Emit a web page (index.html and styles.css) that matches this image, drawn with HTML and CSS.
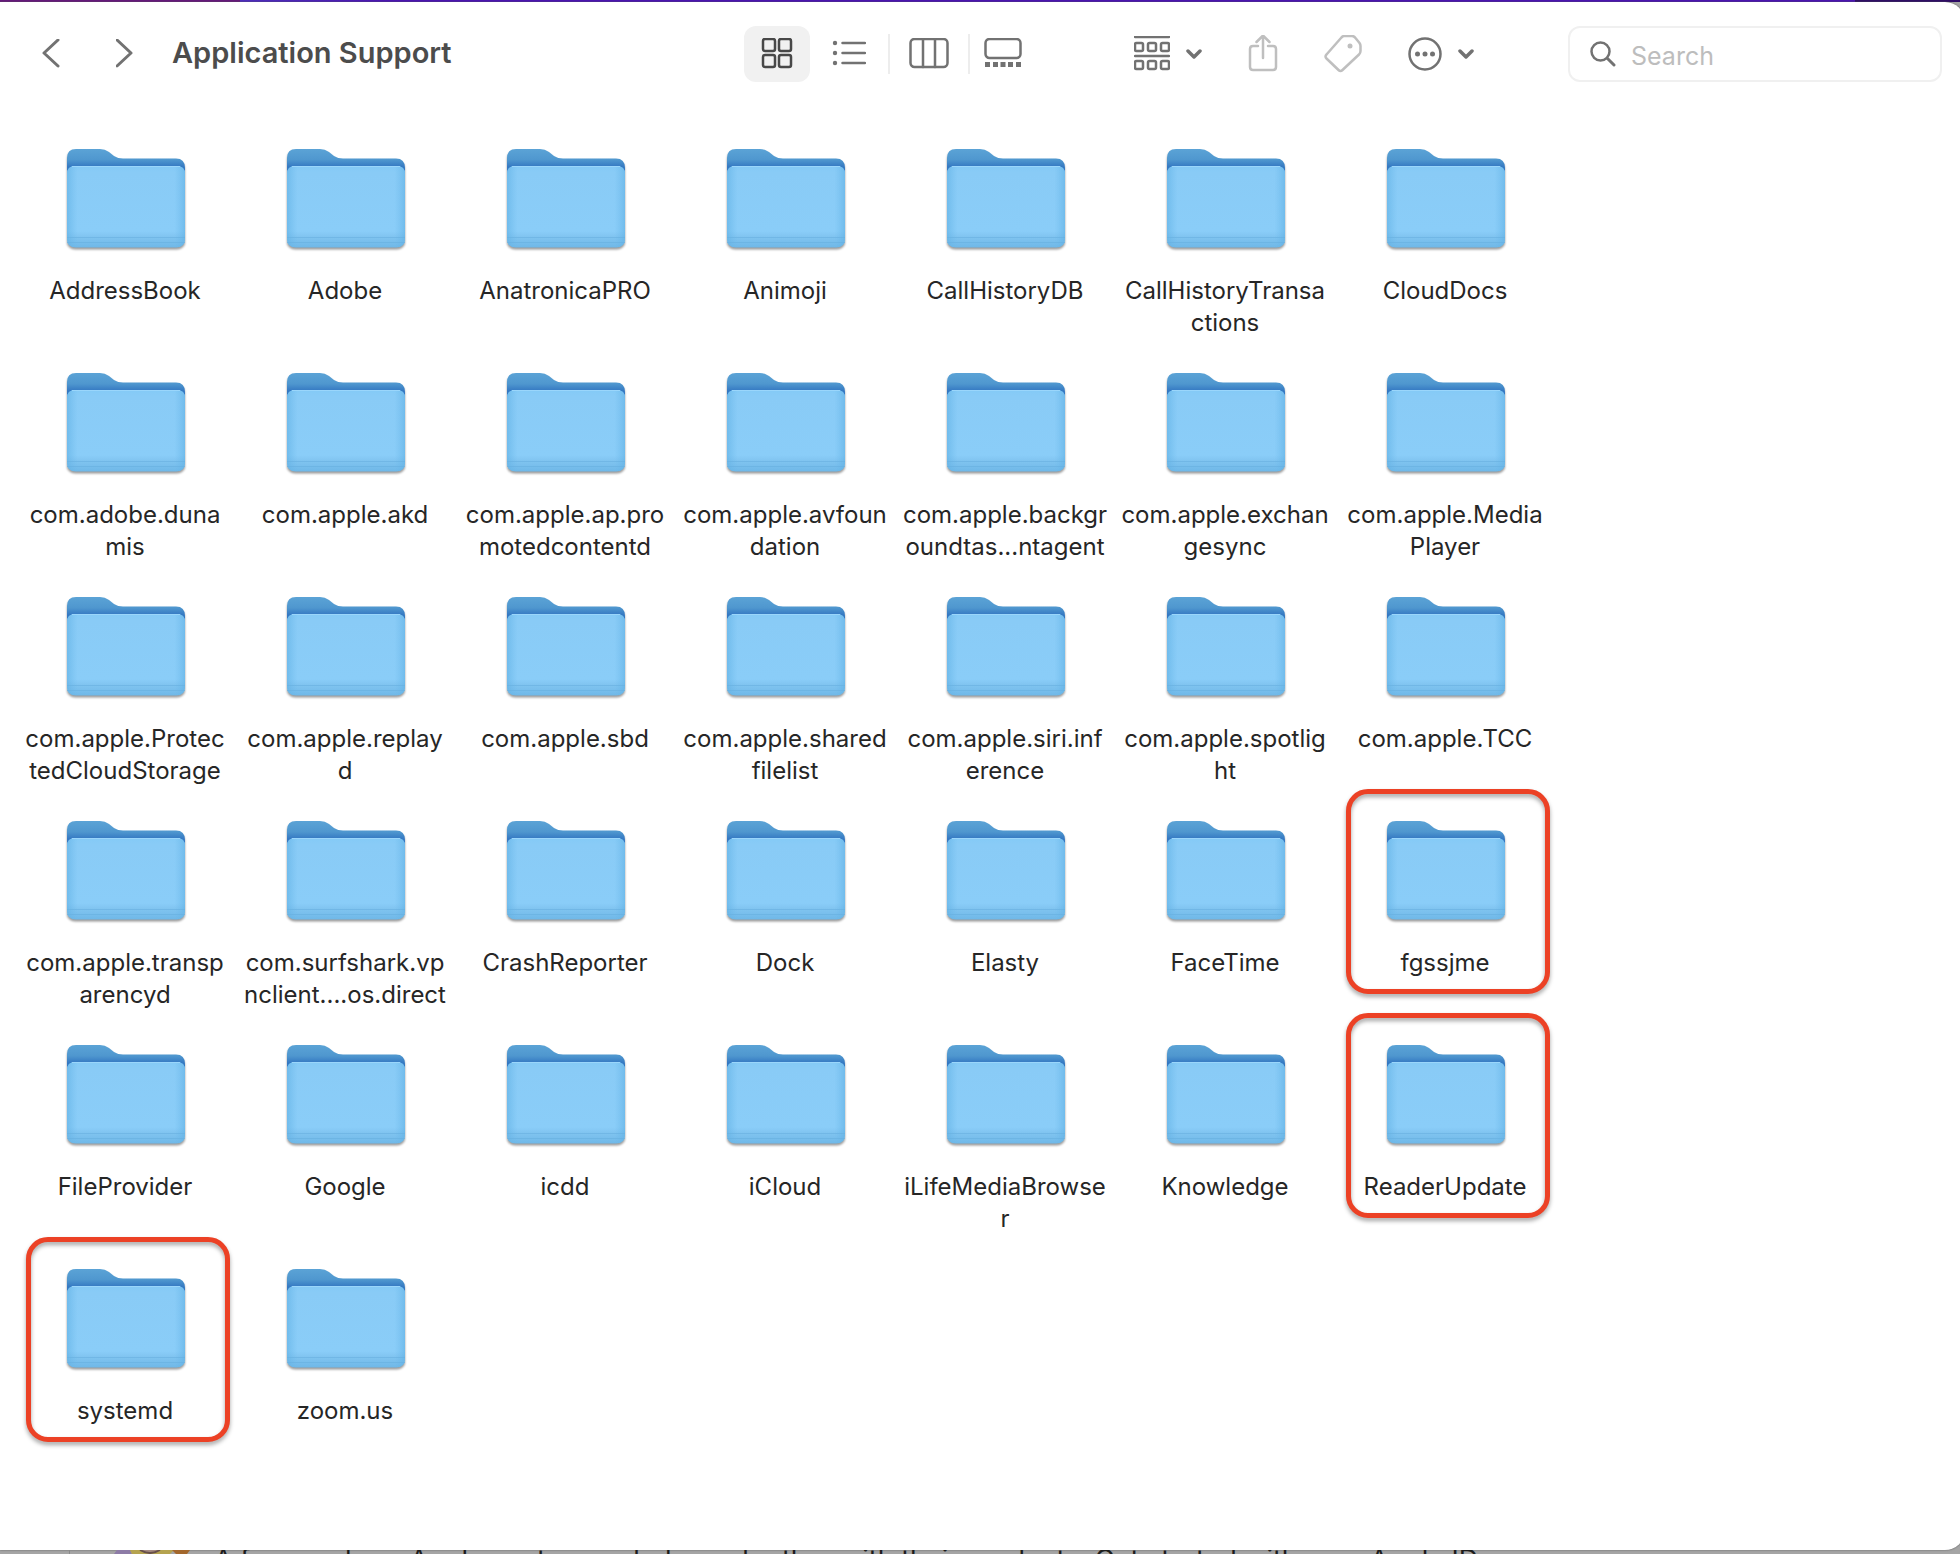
FILE: index.html
```html
<!DOCTYPE html>
<html lang="en">
<head>
<meta charset="utf-8">
<title>Application Support</title>
<link rel="stylesheet" href="styles.css">
<script src="folders.js" defer></script>
</head>
<body>
<svg class="sprite" aria-hidden="true">
  <defs>
    <linearGradient id="back" x1="0" y1="0" x2="0" y2="1">
      <stop offset="0" stop-color="#5ba3d6"/>
      <stop offset="0.12" stop-color="#4f97cf"/>
      <stop offset="0.2" stop-color="#3478c2"/>
      <stop offset="1" stop-color="#3478c2"/>
    </linearGradient>
    <linearGradient id="front" x1="0" y1="0" x2="0" y2="1">
      <stop offset="0" stop-color="#84caf6"/>
      <stop offset="0.08" stop-color="#89cbf6"/>
      <stop offset="0.8" stop-color="#8acdf8"/>
      <stop offset="0.87" stop-color="#80c4f0"/>
      <stop offset="1" stop-color="#6fb8e8"/>
    </linearGradient>
    <linearGradient id="sides" x1="0" y1="0" x2="1" y2="0">
      <stop offset="0" stop-color="#5fb0e4" stop-opacity="0.6"/>
      <stop offset="0.09" stop-color="#6bb8ea" stop-opacity="0"/>
      <stop offset="0.91" stop-color="#6bb8ea" stop-opacity="0"/>
      <stop offset="1" stop-color="#5fb0e4" stop-opacity="0.6"/>
    </linearGradient>
    <symbol id="folder" viewBox="0 0 118 99">
      <path fill="url(#back)" d="M0 9Q0 0 9 0H33Q38 0 42 3L47 7Q51 9.500 56 9.500H109Q118 9.500 118 19V90H0Z"/>
      <path fill="url(#front)" d="M0 25Q0 17 8 17H110Q118 17 118 25V90Q118 98.500 109 98.500H9Q0 98.500 0 90Z"/>
      <path fill="url(#sides)" d="M0 25Q0 17 8 17H110Q118 17 118 25V90Q118 98.500 109 98.500H9Q0 98.500 0 90Z"/>
      <path fill="none" stroke="#9ad6fb" d="M5 17.500H113"/>
      <path fill="none" stroke="#68afe0" d="M0 88.500H118M0 93.500H118" opacity="0.6"/>
    </symbol>
  </defs>
</svg>

<div class="desktop">
  <div class="menu-strip"></div>
  <main class="window">
    <header class="toolbar">
      <nav class="history">
        <button type="button" aria-label="Back"><svg width="18" height="30" viewBox="0 0 18 30"><path class="line thick" d="M16 1L2 14L16 27"/></svg></button>
        <button type="button" aria-label="Forward"><svg width="18" height="30" viewBox="0 0 18 30"><path class="line thick" d="M1 1L15 14L1 27"/></svg></button>
      </nav>
      <h1 class="title">Application Support</h1>
      <div class="views">
        <button type="button" class="view selected" aria-label="Icons"><svg width="32" height="32" viewBox="0 1 32 32"><g class="line dark"><rect x="2" y="2" width="12" height="12" rx="2"/><rect x="18" y="2" width="12" height="12" rx="2"/><rect x="2" y="18" width="12" height="12" rx="2"/><rect x="18" y="18" width="12" height="12" rx="2"/></g></svg></button>
        <button type="button" class="view wide" aria-label="List"><svg width="34" height="32" viewBox="0 1 34 32"><g class="solid"><circle cx="3" cy="6" r="2.200"/><circle cx="3" cy="16" r="2.200"/><circle cx="3" cy="26" r="2.200"/></g><path class="line" d="M10.500 6H33M10.500 16H33M10.500 26H33"/></svg></button>
        <span class="divider"></span>
        <button type="button" class="view wide" aria-label="Columns"><svg width="40" height="32" viewBox="0 1 40 32"><g class="line"><rect x="1.500" y="2" width="37" height="28" rx="4"/><path d="M14 2V30M26 2V30"/></g></svg></button>
        <span class="divider"></span>
        <button type="button" class="view" aria-label="Gallery"><svg width="38" height="32" viewBox="0 1 38 32"><rect class="line" x="1.500" y="2" width="35" height="19" rx="4"/><path class="solid" d="M1 25h5v5H1zM9 25h5v5H9zM16.500 25h5v5h-5zM24 25h5v5h-5zM32 25h5v5h-5z"/></svg></button>
      </div>
      <div class="actions">
        <button type="button" class="action" aria-label="Group items">
          <svg width="36" height="36" viewBox="0 1 36 36"><g class="line"><path d="M1 2H35M1 21H35"/><rect x="1" y="8" width="8" height="8" rx="1.500"/><rect x="14" y="8" width="8" height="8" rx="1.500"/><rect x="27" y="8" width="8" height="8" rx="1.500"/><rect x="1" y="26" width="8" height="8" rx="1.500"/><rect x="14" y="26" width="8" height="8" rx="1.500"/><rect x="27" y="26" width="8" height="8" rx="1.500"/></g></svg>
          <svg width="16" height="12" viewBox="0 0 16 12"><path class="line bold" d="M2 3L8 9L14 3"/></svg>
        </button>
        <button type="button" class="action" aria-label="Share" disabled>
          <svg width="30" height="38" viewBox="0 2 30 38"><path class="line" d="M10 13H5Q2 13 2 16V34Q2 37 5 37H25Q28 37 28 34V16Q28 13 25 13H20M15 25V3M8.500 9L15 2.500L21.500 9"/></svg>
        </button>
        <button type="button" class="action" aria-label="Tags" disabled>
          <svg width="38" height="38" viewBox="0 1 38 38"><path class="line" d="M20 2H28Q30 2 31.500 4L35.500 9Q36.500 10.500 36.500 12V17Q36.500 19 35 20.500L18.500 36Q16.500 38 14.500 36L2.500 24.500Q0.500 22.500 2.500 20.500L17 4Q18.500 2 20 2Z"/><circle class="solid" cx="26" cy="12" r="2.500"/></svg>
        </button>
        <button type="button" class="action" aria-label="More">
          <svg width="34" height="34" viewBox="0 0 34 34"><circle class="line" cx="17" cy="17" r="15.500"/><g class="solid"><circle cx="9.500" cy="17" r="2.500"/><circle cx="17" cy="17" r="2.500"/><circle cx="24.500" cy="17" r="2.500"/></g></svg>
          <svg width="16" height="12" viewBox="0 0 16 12"><path class="line bold" d="M2 3L8 9L14 3"/></svg>
        </button>
      </div>
      <label class="search">
        <svg width="26" height="26" viewBox="0 0 26 26"><circle class="line" cx="10.500" cy="10.500" r="9"/><path class="line thick" d="M17.500 17.500L24 24"/></svg>
        <input type="search" placeholder="Search" aria-label="Search">
      </label>
    </header>
    <ul class="folders" id="folders"></ul>
  </main>
  <footer class="backdrop">
    <span class="backdrop-edge"></span>
    <svg class="backdrop-badge" width="76" height="4" viewBox="0 0 76 4"><path fill="#8d7ba6" d="M0 4L3 0H16L18 4Z"/><path fill="#b5a34f" d="M16 0H60L56 4H18Z"/><path fill="#a3672c" d="M58 0H76L73 4H62Z"/><path fill="#a58a80" stroke="#68504b" stroke-width="2" d="M26 0Q36 6 46 0"/></svg>
    <p>A forum where Apple customers help each other with their products. Get started with your Apple ID.</p>
  </footer>
</div>
</body>
</html>
```
FILE: styles.css
```css
* { box-sizing: border-box; }

body {
  margin: 0;
  background: #a5a5a5;
  color: #262626;
  font-family: Inter, "Liberation Sans", sans-serif;
}

button {
  padding: 0;
  border: 0;
  background: none;
  color: inherit;
  font: inherit;
}

svg { display: block; flex: none; }
.sprite { position: absolute; width: 0; height: 0; }

.line {
  fill: none;
  stroke: #727272;
  stroke-width: 2.500;
  stroke-linecap: round;
  stroke-linejoin: round;
}
.thick { stroke-width: 3; }
.bold { stroke-width: 3.500; }
.dark { stroke: #484848; }
.solid { fill: #727272; }
:disabled .line { stroke: #bfbfbf; }
:disabled .solid { fill: #bfbfbf; }

.desktop {
  display: flex;
  flex-direction: column;
  height: 100vh;
  overflow: hidden;
}

.menu-strip {
  flex: none;
  height: 2px;
  background: linear-gradient(90deg, #66177c 240px, #4c2cc0 240px, #4a12b4 400px, #4a12b4 calc(100% - 105px), #2e0b66 calc(100% - 105px));
}

/* The window runs slightly past the right edge of the screen */
.window {
  flex: 1;
  margin-right: -5px;
  background: #fff;
  border-radius: 0 20px 20px 0;
  box-shadow: 0 0 2px #555;
}

.toolbar {
  display: flex;
  align-items: center;
  height: 104px;
  padding: 0 23px 0 42px;
}

.history { display: flex; gap: 56px; }

.title {
  width: 572px;
  margin: 0 0 0 38px;
  padding-bottom: 2px;
  color: #4c4c4c;
  font-size: 29px;
  font-weight: 600;
  line-height: 36px;
}

.views { display: flex; align-items: center; }
.view {
  display: grid;
  place-items: center;
  width: 66px;
  height: 56px;
  border-radius: 12px;
}
.view.wide { width: 78px; }
.view.selected { background: #f1f1f1; }
.divider { width: 2px; height: 40px; background: #ededed; }

.actions { display: flex; align-items: center; gap: 46px; margin-left: 98px; }
.action { display: flex; align-items: center; gap: 16px; }

.search {
  display: flex;
  align-items: center;
  gap: 15px;
  width: 374px;
  height: 56px;
  margin-left: auto;
  padding: 0 20px;
  border: 2px solid #f0f0f0;
  border-radius: 12px;
}
.search input {
  flex: 1;
  min-width: 0;
  padding: 4px 0 0;
  border: 0;
  outline: 0;
  background: none;
  font: 25px/32px Inter, "Liberation Sans", sans-serif;
}
.search input::placeholder { color: #bdbdbd; }

.folders {
  display: grid;
  grid-template-columns: repeat(7, 220px);
  grid-auto-rows: 224px;
  margin: 0;
  padding: 24px 0 0 15px;
  list-style: none;
}
.folder {
  position: relative;
  display: flex;
  flex-direction: column;
  align-items: center;
  padding-top: 19px;
}
.folder svg {
  margin-left: 2px;
  filter: drop-shadow(0 2px 1px rgba(0, 0, 0, 0.4));
}
.folder-name {
  margin-top: 27px;
  font-size: 24px;
  line-height: 32px;
  text-align: center;
  white-space: pre;
}

/* Hand-drawn highlight laid over a folder */
.mark {
  position: absolute;
  top: -13px;
  left: 11px;
  width: 204px;
  height: 205px;
  border: 5px solid #ec4125;
  border-radius: 22px;
  filter: drop-shadow(0 3px 2px rgba(0, 0, 0, 0.35));
}

.backdrop {
  display: flex;
  flex: none;
  height: 4px;
  overflow: hidden;
  color: #1c1c1c;
}
.backdrop-edge { width: 70px; border-right: 1px solid #8a8a8a; }
.backdrop-badge { margin: 0 24px 0 44px; }
.backdrop p {
  margin: 0;
  font-size: 27px;
  line-height: 20px;
  white-space: nowrap;
}
```
FILE: folders.js
```js
const names = [
  "AddressBook", "Adobe", "AnatronicaPRO", "Animoji", "CallHistoryDB", "CallHistoryTransa\nctions", "CloudDocs",
  "com.adobe.duna\nmis", "com.apple.akd", "com.apple.ap.pro\nmotedcontentd", "com.apple.avfoun\ndation", "com.apple.backgr\noundtas...ntagent", "com.apple.exchan\ngesync", "com.apple.Media\nPlayer",
  "com.apple.Protec\ntedCloudStorage", "com.apple.replay\nd", "com.apple.sbd", "com.apple.shared\nfilelist", "com.apple.siri.inf\nerence", "com.apple.spotlig\nht", "com.apple.TCC",
  "com.apple.transp\narencyd", "com.surfshark.vp\nnclient....os.direct", "CrashReporter", "Dock", "Elasty", "FaceTime", "fgssjme",
  "FileProvider", "Google", "icdd", "iCloud", "iLifeMediaBrowse\nr", "Knowledge", "ReaderUpdate",
  "systemd", "zoom.us"
];
const marked = new Set(["fgssjme", "ReaderUpdate", "systemd"]);

document.getElementById("folders").innerHTML = names.map(name => `
  <li class="folder">
    <svg width="118" height="99" aria-hidden="true"><use href="#folder"/></svg>
    <span class="folder-name">${name}</span>
    ${marked.has(name) ? '<span class="mark"></span>' : ""}
  </li>`).join("");
```
